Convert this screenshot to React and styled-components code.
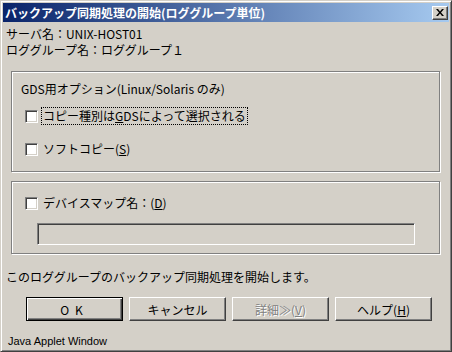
import React from "react";
import styled, { createGlobalStyle } from "styled-components";

const GlobalStyle = createGlobalStyle`
	html, body {
		margin: 0;
		padding: 0;
		background: #d4d0c8;
	}
	* {
		box-sizing: border-box;
	}
`;

const jp = `"Noto Sans CJK JP", "DejaVu Sans", sans-serif`;

const Window = styled.div`
	width: 452px;
	height: 352px;
	background: #d4d0c8;
	border: 1px solid;
	border-color: #d4d0c8 #404040 #404040 #d4d0c8;
	box-shadow: inset 1px 1px #fff, inset -1px -1px #808080;
	padding: 2px;
	display: flex;
	flex-direction: column;
	font-family: ${jp};
	font-size: 12px;
	color: #000;
	overflow: hidden;
`;

const TitleBar = styled.div`
	height: 19px;
	flex: none;
	display: flex;
	align-items: center;
	justify-content: space-between;
	padding: 0 1px 0 2px;
	background: linear-gradient(to right, #0a246a, #a6caf0);
`;

const Title = styled.span`
	color: #fff;
	font-weight: bold;
	font-size: 12px;
	line-height: 19px;
	white-space: nowrap;
`;

const CloseButton = styled.div`
	width: 16px;
	height: 14px;
	background: #d4d0c8;
	border: 1px solid;
	border-color: #fff #404040 #404040 #fff;
	box-shadow: inset -1px -1px #808080;
	display: flex;
	align-items: center;
	justify-content: center;
`;

const Body = styled.div`
	flex: 1;
	display: flex;
	flex-direction: column;
	padding: 4px 0 0 3px;
`;

const Line = styled.div`
	height: 16px;
	line-height: 16px;
	white-space: nowrap;
	margin-top: ${(p) => p.mt || 0}px;
	padding-left: ${(p) => p.pl || 0}px;
`;

const Group = styled.div`
	width: 429px;
	margin-left: 5px;
	margin-top: ${(p) => p.mt}px;
	border: 1px solid #808080;
	box-shadow: 1px 1px 0 #fff, inset 1px 1px 0 #fff;
	padding: ${(p) => p.pad};
	display: flex;
	flex-direction: column;
`;

const CheckRow = styled.div`
	height: 18px;
	display: flex;
	align-items: center;
	gap: 4px;
	padding-left: 13px;
	margin-top: ${(p) => p.mt || 0}px;
`;

const Box = styled.span`
	width: 13px;
	height: 13px;
	flex: none;
	background: #fff;
	border: 1px solid;
	border-color: #808080 #fff #fff #808080;
	box-shadow: inset 1px 1px #404040, inset -1px -1px #d4d0c8;
`;

const CheckText = styled.span`
	line-height: 16px;
	padding: 0 1px;
	white-space: nowrap;
	outline: ${(p) => (p.focused ? "1px dotted #000" : "none")};
	outline-offset: 0;
`;

const Key = styled.span`
	text-decoration: underline;
`;

const Field = styled.div`
	width: 378px;
	height: 22px;
	margin: 11px 0 0 25px;
	background: #d4d0c8;
	border: 1px solid;
	border-color: #808080 #fff #fff #808080;
	box-shadow: inset 1px 1px #404040, inset -1px -1px #d4d0c8;
`;

const ButtonRow = styled.div`
	display: flex;
	gap: 6px;
	padding-left: 20px;
	margin-top: 12px;
`;

const Button = styled.div`
	width: 97px;
	height: 24px;
	display: flex;
	align-items: center;
	justify-content: center;
	background: #d4d0c8;
	border: 1px solid;
	border-color: ${(p) => (p.primary ? "#000" : "#fff #404040 #404040 #fff")};
	box-shadow: ${(p) =>
		p.primary
			? "inset 1px 1px #fff, inset -1px -1px #404040, inset -2px -2px #808080"
			: "inset -1px -1px #808080"};
	color: ${(p) => (p.disabled ? "#808080" : "#000")};
	text-shadow: ${(p) => (p.disabled ? "1px 1px #fff" : "none")};
	letter-spacing: ${(p) => p.ls || 0}px;
	white-space: nowrap;
`;

const Footer = styled.div`
	height: 16px;
	line-height: 16px;
	margin-top: 12px;
	padding-left: 2px;
	font-family: "Liberation Sans", Arial, sans-serif;
	font-size: 11px;
`;

function App() {
	return (
		<>
			<GlobalStyle />
			<Window>
				<TitleBar>
					<Title>バックアップ同期処理の開始(ロググループ単位)</Title>
					<CloseButton>
						<svg width="8" height="7" viewBox="0 0 8 7">
							<path d="M0 0h2l2 2.5L6 0h2L5 3.5 8 7H6L4 4.5 2 7H0l3-3.5z" fill="#000" />
						</svg>
					</CloseButton>
				</TitleBar>
				<Body>
					<Line>サーバ名：UNIX-HOST01</Line>
					<Line>ロググループ名：ロググループ１</Line>
					<Group mt={13} pad="9px 0 13px 0">
						<Line pl={9}>GDS用オプション(Linux/Solaris のみ)</Line>
						<CheckRow mt={10}>
							<Box />
							<CheckText focused>
								コピー種別は<Key>G</Key>DSによって選択される
							</CheckText>
						</CheckRow>
						<CheckRow mt={15}>
							<Box />
							<CheckText>
								ソフトコピー(<Key>S</Key>)
							</CheckText>
						</CheckRow>
					</Group>
					<Group mt={9} pad="12px 0 8px 0">
						<CheckRow>
							<Box />
							<CheckText>
								デバイスマップ名：(<Key>D</Key>)
							</CheckText>
						</CheckRow>
						<Field />
					</Group>
					<Line mt={15}>このロググループのバックアップ同期処理を開始します。</Line>
					<ButtonRow>
						<Button primary ls={6}>
							OK
						</Button>
						<Button>キャンセル</Button>
						<Button disabled>
							詳細≫(<Key>V</Key>)
						</Button>
						<Button>
							ヘルプ(<Key>H</Key>)
						</Button>
					</ButtonRow>
					<Footer>Java Applet Window</Footer>
				</Body>
			</Window>
		</>
	);
}

export default App;
